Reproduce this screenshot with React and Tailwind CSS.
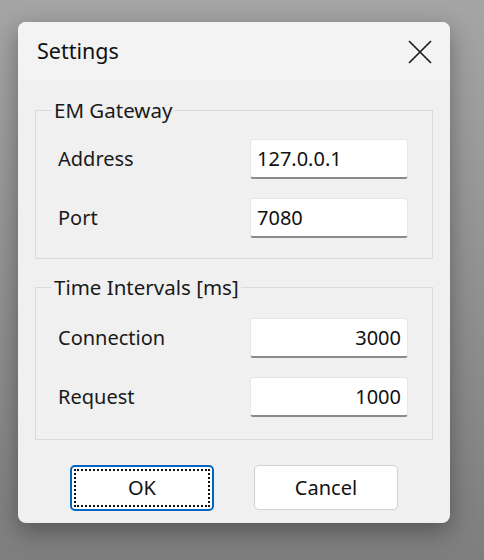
import React from "react";

const font = { fontFamily: "'Noto Sans', 'Open Sans', sans-serif" };

function Field({ label, value, right }) {
  return (
    <div className="flex items-center h-[40px]">
      <span className="w-[192px] text-[20px] text-[#1a1a1a]">{label}</span>
      <div
        className={`w-[158px] h-[40px] bg-white rounded-[3px] border border-[#e6e6e6] border-b-2 border-b-[#8a8a8a] flex items-center px-[6px] text-[20px] text-[#111] ${
          right ? "justify-end" : "justify-start"
        }`}
      >
        {value}
      </div>
    </div>
  );
}

function Group({ title, top, bottom, children }) {
  return (
    <fieldset className={`border border-[#dadada] mx-[17px] ${top} ${bottom} flex flex-col`}>
      <legend className="ml-[16px] px-[2px] text-[20.5px] leading-[26px] text-[#1a1a1a]">{title}</legend>
      <div className="pl-[22px] flex flex-col gap-[19px]">{children}</div>
    </fieldset>
  );
}

export default function App() {
  return (
    <div
      className="w-[484px] h-[560px] bg-gradient-to-b from-[#a5a5a5] to-[#7e7e7e] pt-[22px] pl-[18px] overflow-hidden"
      style={font}
    >
      <div className="w-[432px] h-[501px] rounded-[8px] bg-[#f0f0f0] shadow-[0_8px_24px_rgba(0,0,0,0.35)] overflow-hidden flex flex-col">
        {/* Title bar */}
        <div className="h-[58px] bg-[#f3f3f3] flex items-center justify-between pl-[19px] pr-[17px] pt-[1px]">
          <span className="text-[21.5px] text-[#111]">Settings</span>
          <svg width="26" height="26" viewBox="0 0 26 26">
            <path d="M2 2 L24 24 M24 2 L2 24" stroke="#1c1c1c" strokeWidth="1.7" fill="none" />
          </svg>
        </div>

        <div className="pt-[17px]">
          <Group title="EM Gateway" top="pt-[16px]" bottom="pb-[20px]">
            <Field label="Address" value="127.0.0.1" />
            <Field label="Port" value="7080" />
          </Group>

          <div className="h-[15px]" />

          <Group title="Time Intervals [ms]" top="pt-[18px]" bottom="pb-[22px]">
            <Field label="Connection" value="3000" right />
            <Field label="Request" value="1000" right />
          </Group>

          <div className="flex justify-center gap-[40px] pt-[25px]">
            <button className="w-[144px] h-[46px] rounded-[5px] border-2 border-[#0067c0] bg-white p-[2px]">
              <div className="w-full h-full border-2 border-dotted border-[#111] flex items-center justify-center text-[20px] text-[#111]">
                OK
              </div>
            </button>
            <button className="w-[144px] h-[45px] rounded-[5px] border border-[#d0d0d0] bg-white flex items-center justify-center text-[20px] text-[#111]">
              Cancel
            </button>
          </div>
        </div>
      </div>
    </div>
  );
}
